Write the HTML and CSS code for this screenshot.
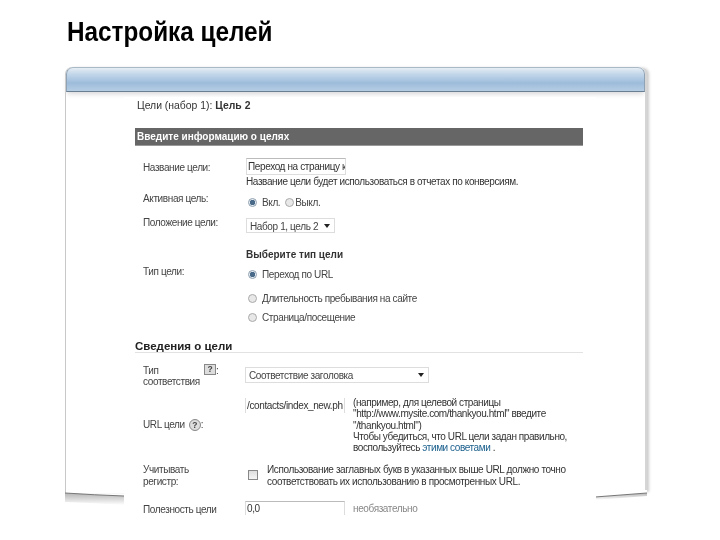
FILE: index.html
```html
<!DOCTYPE html>
<html lang="ru">
<head>
<meta charset="utf-8">
<title>Настройка целей</title>
<link rel="stylesheet" href="styles.css">
</head>
<body>
<div class="slide">
  <h1 class="title">Настройка целей</h1>
  <div class="window">
    <div class="window-bar"></div>
    <svg class="window-edge" width="584" height="18" viewBox="0 0 584 18" aria-hidden="true">
      <defs>
        <linearGradient id="shade" x1="0" y1="0" x2="0" y2="1">
          <stop offset="0" stop-color="#b4b4b4"/>
          <stop offset="1" stop-color="#ffffff"/>
        </linearGradient>
      </defs>
      <path d="M0 3 Q30 5 59 6 V15 Q30 13 0 12 Z" fill="url(#shade)"/>
      <path d="M530 7 L582 3 V6 L530 10 Z" fill="url(#shade)"/>
      <path d="M530 0 H582 V3 L530 7 Z" fill="#fff"/>
      <path d="M0 3 Q30 5 59 6 M530 7 L582 3" fill="none" stroke="#777" stroke-width="1"/>
    </svg>
    <div class="sheet">
      <div class="crumb">Цели (набор 1): <b>Цель 2</b></div>
      <div class="band">Введите информацию о целях</div>
      <div class="form form-a">
        <div class="label first">Название цели:</div>
        <div class="field">
          <div class="input">Переход на страницу к</div>
          <div class="hint">Название цели будет использоваться в отчетах по конверсиям.</div>
        </div>
        <div class="label">Активная цель:</div>
        <div class="field radios pair">
          <span class="radio on"></span><span>Вкл.</span><span class="radio"></span><span class="tight">Выкл.</span>
        </div>
        <div class="label">Положение цели:</div>
        <div class="field">
          <div class="select small">Набор 1, цель 2<span class="caret"></span></div>
        </div>
      </div>
      <div class="type-head">Выберите тип цели</div>
      <div class="form form-b">
        <div class="label">Тип цели:</div>
        <div class="options">
          <div class="radios"><span class="radio on"></span><span>Переход по URL</span></div>
          <div class="radios"><span class="radio"></span><span>Длительность пребывания на сайте</span></div>
          <div class="radios"><span class="radio"></span><span>Страница/посещение</span></div>
        </div>
      </div>
      <h2 class="section">Сведения о цели</h2>
      <div class="form form-c">
        <div class="label match"><span class="match-text">Тип<br>соответствия</span><span class="help square">?</span><span>:</span></div>
        <div class="field">
          <div class="select wide">Соответствие заголовка<span class="caret"></span></div>
        </div>
        <div class="label url"><span>URL цели</span><span class="help round">?</span><span>:</span></div>
        <div class="url-row">
          <div class="input clipped">/contacts/index_new.ph</div>
          <div class="note">(например, для целевой страницы<br>"http://www.mysite.com/thankyou.html" введите<br>"/thankyou.html")<br>Чтобы убедиться, что URL цели задан правильно,<br>воспользуйтесь <a class="link">этими советами</a> .</div>
        </div>
        <div class="label">Учитывать<br>регистр:</div>
        <div class="case-row">
          <span class="checkbox"></span>
          <div class="case-text">Использование заглавных букв в указанных выше URL должно точно<br>соответствовать их использованию в просмотренных URL.</div>
        </div>
        <div class="label value-label">Полезность цели</div>
        <div class="value-row">
          <div class="input">0,0</div>
          <div class="optional">необязательно</div>
        </div>
      </div>
    </div>
  </div>
</div>
</body>
</html>
```

FILE: styles.css
```css
* { box-sizing: border-box; }
html, body { margin: 0; padding: 0; background: #fff; }
body { width: 720px; height: 540px; overflow: hidden; font-family: "Liberation Sans", Arial, sans-serif; }
.slide { padding: 17px 0 0 65px; }
.title { margin: 0 0 0 2px; height: 50px; font-size: 27px; line-height: 30px; font-weight: 700; color: #000; white-space: nowrap; transform: scaleX(.9); transform-origin: left center; }

.window { position: relative; width: 582px; height: 426px; background: #fff; border-right: 2px solid #d5d5d5; border-left: 1px solid #c8c8c8; box-shadow: 3px 0 3px -1px #ccc; border-radius: 7px 7px 0 0; }
.window-bar { height: 25px; border: 1px solid #8fa3b5; border-top-color: #a9b9c6; border-bottom-color: #6b7f92; border-radius: 7px 7px 0 0; background: linear-gradient(#e6edf4 0, #c5d8ea 25%, #9dbcdb 65%, #b5cde3 100%); box-shadow: 0 3px 5px -1px #d8d8d8; }
.window-edge { position: absolute; left: -1px; top: 423px; }

.sheet { position: absolute; left: 58px; top: 30px; width: 472px; height: 418px; padding: 0 12px 0 11px; background: #fff; overflow: hidden; font-size: 10px; letter-spacing: -.38px; line-height: 12px; color: #333; filter: blur(.4px); }
.crumb { margin: 3px 0 0 2px; height: 28px; font-size: 10.4px; letter-spacing: 0; }
.band { height: 18px; width: 448px; padding: 3px 2px; background: #666; border-bottom: 1px solid #999; color: #fff; font-weight: 700; letter-spacing: 0; }

.form { display: grid; grid-template-columns: 111px 1fr; }
.label { padding: 1px 0 0 8px; color: #444; }
.form-a { margin-top: 12px; grid-template-rows: 34px 24px 30px; }
.first { padding-top: 4px; }
.input { width: 100px; height: 17px; padding: 2px 1px; border: 1px solid #ddd; border-top-color: #bbb; background: #fff; white-space: nowrap; overflow: hidden; color: #333; }
.hint { margin-top: 1px; }
.radios { display: flex; align-items: center; gap: 5px; height: 14px; padding-left: 2px; color: #444; }
.radios > span:not(.radio) { padding-top: 2px; }
.pair { margin-top: 3px; }
.tight { margin-left: -4px; }
.radio { width: 9px; height: 9px; border-radius: 50%; border: 1px solid #aaa; background: #e8e8e8; flex: none; }
.radio.on { background: radial-gradient(circle, #4a6a8a 0 2.5px, #e8eef4 3px); border-color: #8fa0b0; }
.select { position: relative; height: 15px; padding: 2px 3px 0; border: 1px solid #ddd; background: #fff; white-space: nowrap; color: #444; }
.small { width: 89px; margin-top: 2px; }
.wide { width: 184px; height: 16px; }
.caret { position: absolute; right: 4px; top: 5px; width: 0; height: 0; border-left: 3px solid transparent; border-right: 3px solid transparent; border-top: 4px solid #222; }

.type-head { margin: 3px 0 0 111px; height: 12px; font-weight: 700; letter-spacing: 0; }
.form-b { margin-top: 4px; }
.options { display: flex; flex-direction: column; padding-top: 2px; }
.options .radios:nth-child(2) { margin-top: 10px; }
.options .radios:nth-child(3) { margin-top: 5px; }

.section { margin: 16px 0 0; height: 13px; width: 448px; font-size: 11.5px; letter-spacing: 0; line-height: 13px; font-weight: 700; color: #222; border-bottom: 1px solid #e2e2e2; }
.form-c { margin-top: 14px; grid-template-columns: 110px 1fr; grid-template-rows: 31px 65px 38px 15px; }
.match { display: flex; margin-top: -3px; line-height: 11px; }
.match-text { width: 61px; }
.help { display: inline-flex; align-items: center; justify-content: center; width: 12px; height: 11px; margin-top: -1px; font-size: 8.5px; font-weight: 700; background: #ddd; border: 1px solid #888; color: #444; }
.help.round { height: 12px; border-radius: 50%; margin: 0 0 0 4px; }
.url { display: flex; align-items: center; height: 13px; margin-top: 20px; }
.url-row { display: flex; gap: 8px; }
.clipped { border-width: 0 1px; height: 15px; }
.note { line-height: 11.25px; letter-spacing: -.42px; margin-top: -1px; }
.link { color: #1a5f8c; }
.case-row { display: flex; gap: 9px; padding-left: 3px; }
.case-text { margin-top: 1px; line-height: 11.5px; }
.checkbox { width: 10px; height: 10px; margin-top: 7px; border: 1px solid #888; background: linear-gradient(#ddd, #f5f5f5); flex: none; }
.value-label { padding-top: 3px; }
.value-row { display: flex; gap: 8px; align-items: flex-start; }
.value-row .input { height: 15px; padding-top: 1px; }
.optional { color: #888; margin-top: 2px; }
```
